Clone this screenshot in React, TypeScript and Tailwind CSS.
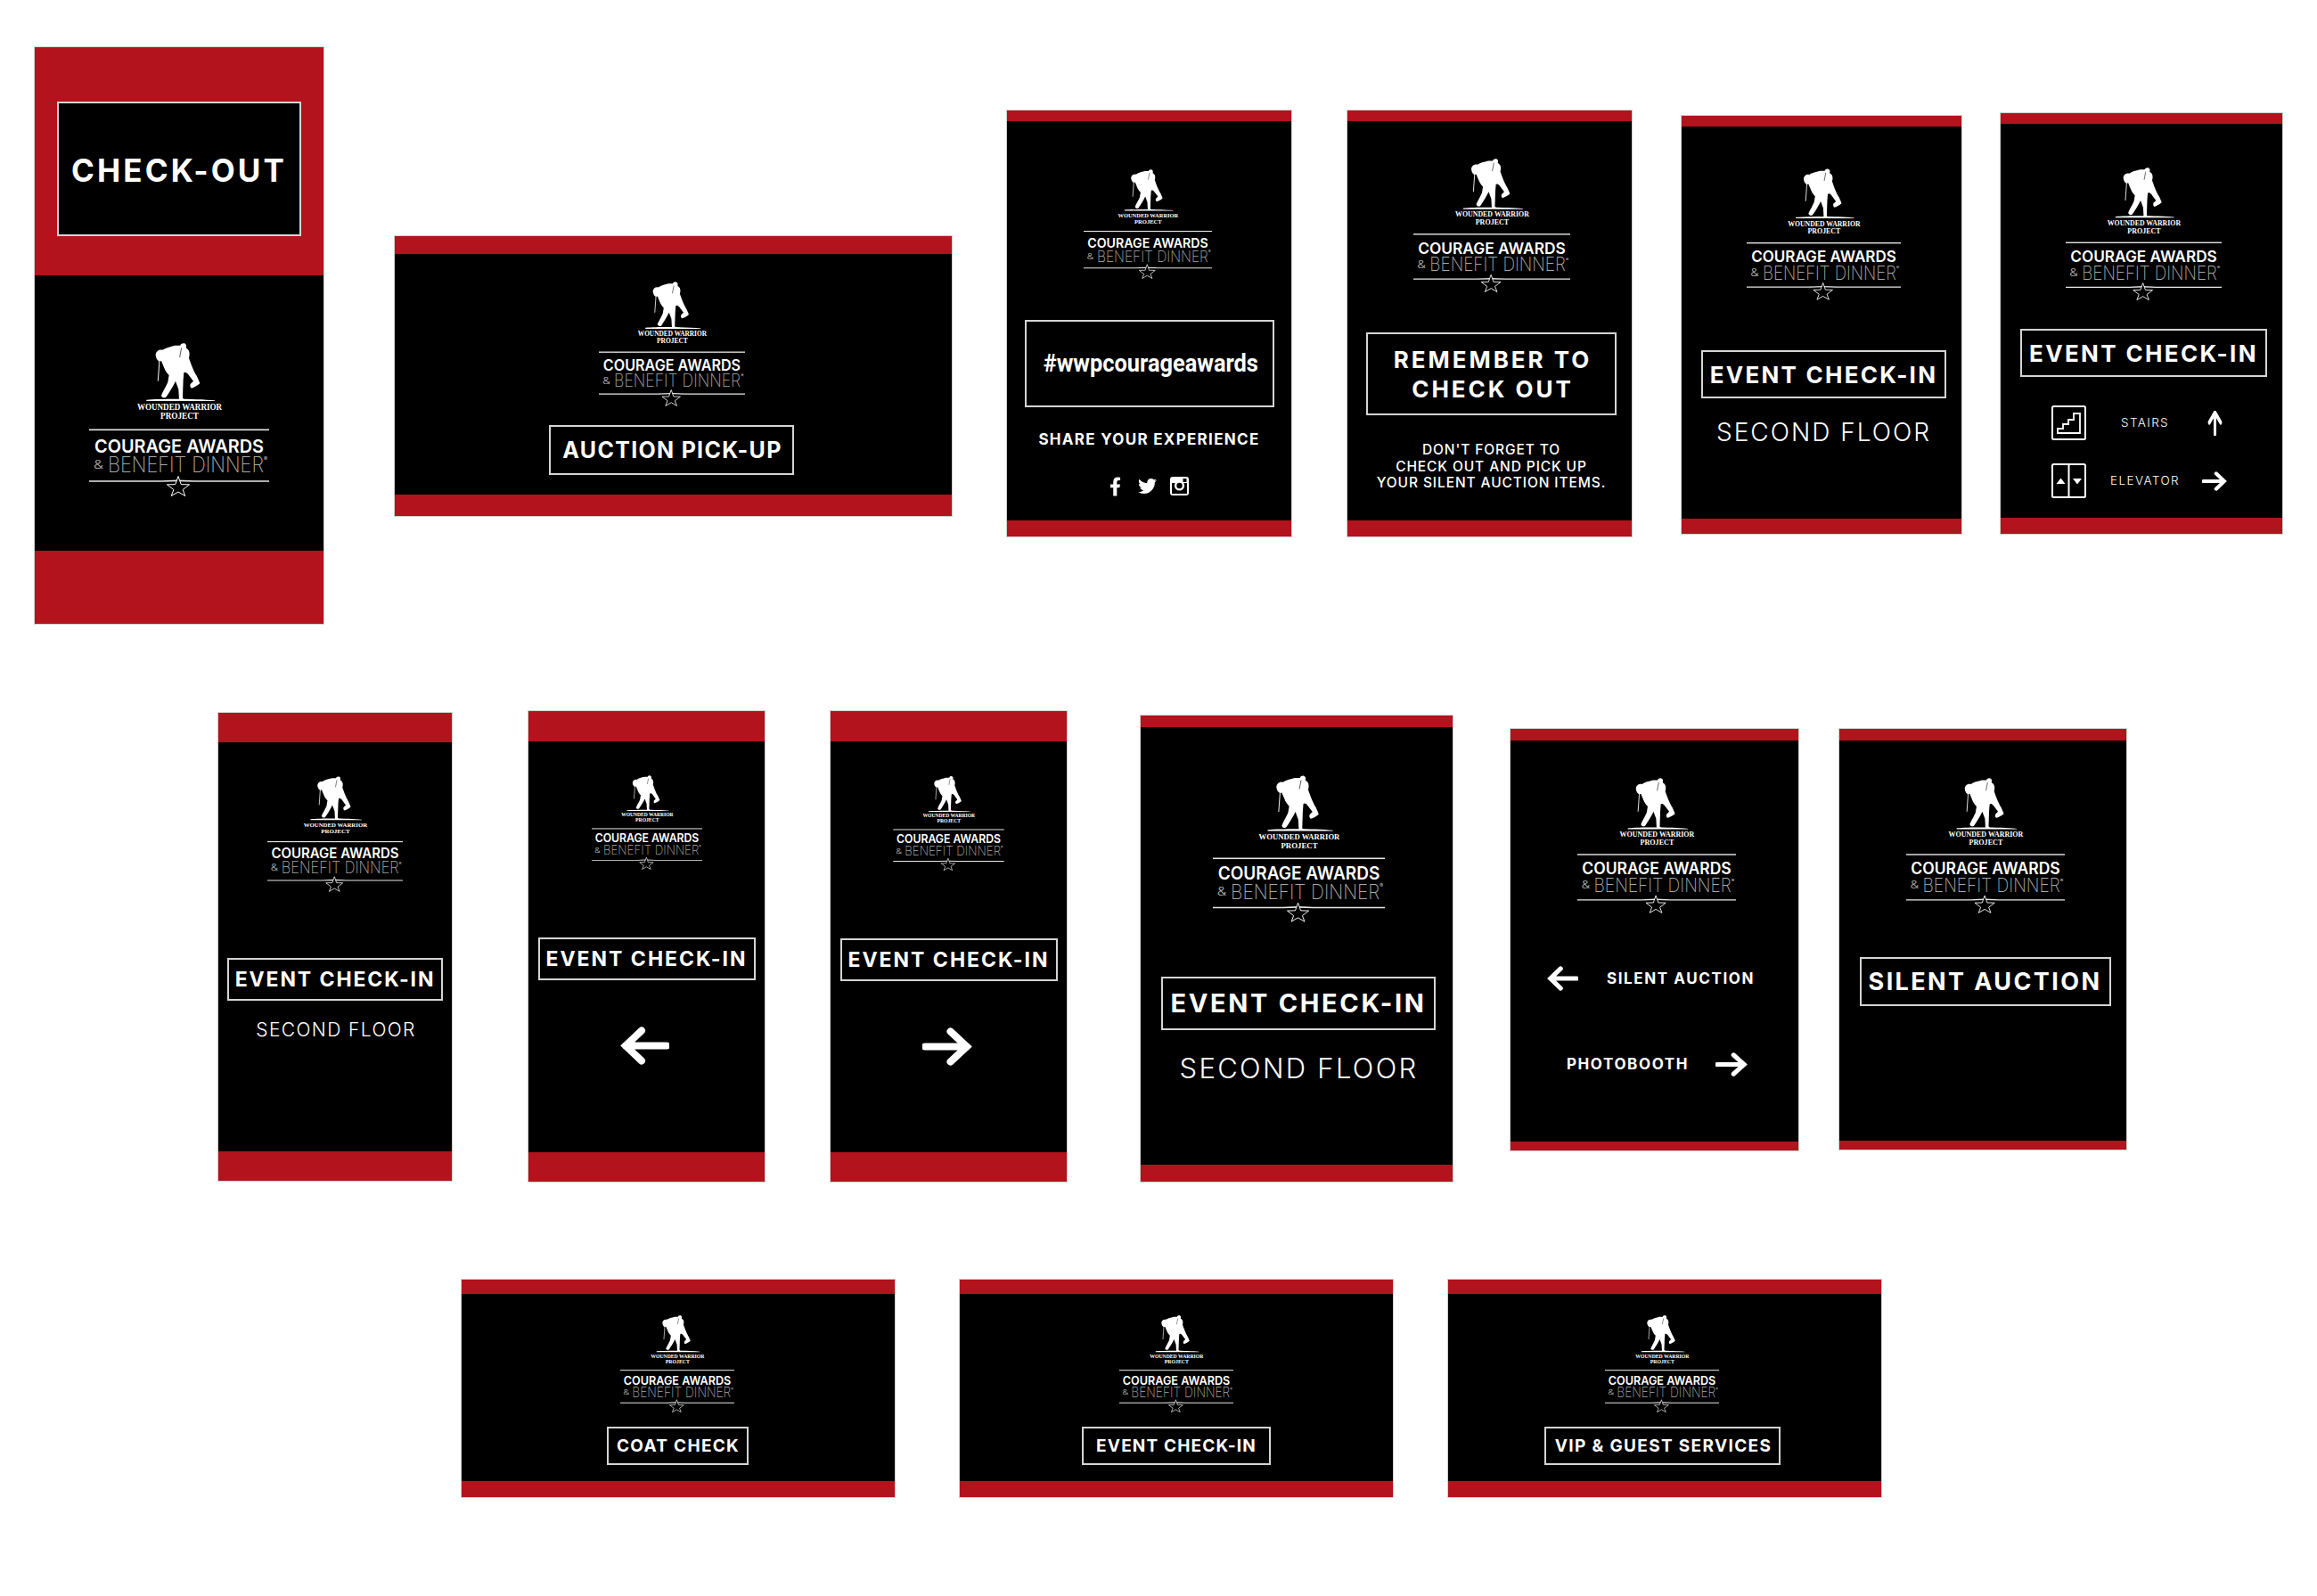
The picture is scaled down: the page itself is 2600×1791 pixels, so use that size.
import React from "react";
import { FaFacebookF, FaTwitter } from "react-icons/fa";

function Logo({ className }: { className: string }) {
  return (
    <svg viewBox="0 0 202 172" className={`shrink-0 ${className}`}>
      <g transform="translate(74.3,0) scale(.3333)" fill="#fff">
        <path d="M1 40C2 28 12 20 24 23C34 16 50 12 66 8L84 8C84 3 92 -1 98 1C104 3 106 10 103 16L110 22C116 28 116 40 113 50L122 75C128 90 135 105 140 112L148 130L150 136C140 145 128 150 122 152C118 150 116 144 118 138L128 128L110 104C104 98 100 96 96 100L94 125L92 185C96 188 98 190 96 191L80 191L78 155L68 128C60 145 48 165 36 182C30 186 22 184 20 176C24 165 34 150 42 132L46 108C38 100 33 92 30 84L24 70L20 60C12 64 3 58 1 40Z" />
        <path d="M14 58L9 128" stroke="#fff" strokeWidth="3" />
        <path d="M-30 191C20 187 140 187 200 193L200 195L-30 195Z" />
        <path d="M88 16L82 48" stroke="#000" strokeWidth="2" fill="none" />
      </g>
      <text x="54" y="75" textLength="95" lengthAdjust="spacingAndGlyphs" fill="#fff" className="[font-family:'Liberation_Serif',serif] font-bold text-[9.5px]">WOUNDED WARRIOR</text>
      <text x="80" y="85" textLength="43" lengthAdjust="spacingAndGlyphs" fill="#fff" className="[font-family:'Liberation_Serif',serif] font-bold text-[9.5px]">PROJECT</text>
      <rect x="0" y="96.5" width="202" height="1.6" fill="#e8e8e8" />
      <text x="6" y="122.5" textLength="190" lengthAdjust="spacingAndGlyphs" fill="#fff" className="[font-family:Inter,sans-serif] font-semibold text-[20.5px]">COURAGE AWARDS</text>
      <text x="5" y="141" textLength="11" lengthAdjust="spacingAndGlyphs" fill="#b0b0b0" className="[font-family:Inter,sans-serif] font-light text-[13px]">&amp;</text>
      <text x="21" y="145" textLength="175" lengthAdjust="spacingAndGlyphs" fill="#a8a8a8" className="[font-family:Inter,sans-serif] font-extralight text-[24.5px]">BENEFIT DINNER</text>
      <text x="196" y="132" fill="#ccc" className="[font-family:Inter,sans-serif] text-[6px]">®</text>
      <path d="M0 154.3H82L100 153.6L118 154.3H202V155.8H118L100 155.3L82 155.8H0Z" fill="#e8e8e8" />
      <path d="M100 149.5L103.2 158.6L112.6 158.8L105.1 164.5L107.8 171.5L100 167L92.2 171.5L94.9 164.5L87.4 158.8L96.8 158.6Z" fill="#000" stroke="#fff" strokeWidth="1" />
    </svg>
  );
}

function Arrow({ dir, className }: { dir: "left" | "right" | "up"; className: string }) {
  const d = dir === "left" ? "M52 21.5H6M24 4.5L6 21.5L24 38.5" : dir === "right" ? "M3 21.5H49M31 4.5L49 21.5L31 38.5" : "M27.5 40V3M11 20L27.5 3L44 20";
  return (
    <svg viewBox="0 0 55 43" preserveAspectRatio="none" className={`shrink-0 ${className}`}>
      <path d={d} fill="none" stroke="#fff" strokeWidth="8" strokeLinecap="round" strokeLinejoin="miter" />
    </svg>
  );
}

function Sign({ pos, top, bottom, topContent, children }: { pos: string; top: string; bottom: string; topContent?: React.ReactNode; children: React.ReactNode }) {
  return (
    <div className={`absolute flex flex-col shadow-[0_0_0_1px_#cfcfcf] ${pos}`}>
      <div className={`shrink-0 bg-[#b2131c] ${top}`}>{topContent}</div>
      <div className="flex min-h-0 flex-1 flex-col items-center overflow-hidden bg-black text-white">{children}</div>
      <div className={`shrink-0 bg-[#b2131c] ${bottom}`} />
    </div>
  );
}

const box = "flex shrink-0 items-center justify-center border-2 border-[#d4d4d4] whitespace-nowrap font-bold";

export default function App() {
  return (
    <div className="relative h-[1791px] w-[2600px] overflow-hidden bg-white [font-family:Inter,sans-serif]">
      {/* Row 1 */}
      <Sign
        pos="left-[39px] top-[53px] w-[324px] h-[647px]"
        top="h-[256px] flex justify-center pt-[61px]"
        bottom="h-[82px]"
        topContent={
          <div className={`${box} h-[151px] w-[274px] bg-black pt-[3px] text-[35px] tracking-[3.1px] text-white`}>CHECK-OUT</div>
        }
      >
        <Logo className="mt-[76px] h-[172px] w-[202px]" />
      </Sign>

      <Sign pos="left-[443px] top-[265px] w-[625px] h-[314px]" top="h-[20px]" bottom="h-[24px]">
        <Logo className="mt-[31px] mr-[3px] h-[140px] w-[164px]" />
        <div className={`${box} mt-[21px] mr-[4px] h-[56px] w-[275px] pt-[1px] pl-[2px] text-[25px] tracking-[1.3px]`}>AUCTION PICK-UP</div>
      </Sign>

      <Sign pos="left-[1130px] top-[124px] w-[319px] h-[478px]" top="h-[12px]" bottom="h-[18px]">
        <Logo className="mt-[54px] mr-[3px] h-[123px] w-[144px]" />
        <div className={`${box} mt-[46px] h-[98px] w-[280px] [font-family:Roboto,sans-serif] text-[27px]`}>
          <span className="inline-block translate-x-[2px] scale-x-[.94]">#wwpcourageawards</span>
        </div>
        <div className="mt-[26px] h-[20px] text-[17px] leading-[20px] font-bold tracking-[1.3px] whitespace-nowrap">SHARE YOUR EXPERIENCE</div>
        <div className="mt-[32px] flex h-[21px] items-center">
          <FaFacebookF className="h-[22px] w-[13px]" />
          <FaTwitter className="ml-[19px] h-[21px] w-[21px]" />
          <svg viewBox="0 0 21 21" className="ml-[15px] h-[21px] w-[21px]">
            <rect x="0" y="0" width="21" height="21" rx="3" fill="#fff" />
            <rect x="2" y="7" width="17" height="12" fill="#000" />
            <rect x="14.5" y="2" width="4" height="4" fill="#000" />
            <circle cx="10.5" cy="10" r="5.6" fill="#fff" />
            <circle cx="10.5" cy="10" r="3.2" fill="#000" />
          </svg>
        </div>
      </Sign>

      <Sign pos="left-[1512px] top-[124px] w-[319px] h-[478px]" top="h-[12px]" bottom="h-[18px]">
        <Logo className="mt-[42px] ml-[5px] h-[150px] w-[176px]" />
        <div className={`${box} mt-[45px] ml-[4px] h-[93px] w-[281px] flex-col pl-[3px] text-center text-[26px] leading-[33px] tracking-[2.95px]`}>
          <div>REMEMBER TO</div>
          <div>CHECK OUT</div>
        </div>
        <div className="mt-[30px] ml-[4px] text-center text-[15.5px] leading-[18.5px] font-medium tracking-[0.9px] whitespace-nowrap">
          <div>DON'T FORGET TO</div>
          <div>CHECK OUT AND PICK UP</div>
          <div>YOUR SILENT AUCTION ITEMS.</div>
        </div>
      </Sign>

      <Sign pos="left-[1887px] top-[130px] w-[314px] h-[469px]" top="h-[12px]" bottom="h-[17px]">
        <Logo className="mt-[47px] ml-[5px] h-[148px] w-[173px]" />
        <div className={`${box} mt-[56px] ml-[5px] h-[54px] w-[275px] text-[26px] tracking-[2.25px]`}>EVENT CHECK-IN</div>
        <div className="mt-[21px] ml-[5px] text-[28px] leading-[34px] font-light tracking-[2px] whitespace-nowrap">SECOND FLOOR</div>
      </Sign>

      <Sign pos="left-[2245px] top-[127px] w-[316px] h-[472px]" top="h-[12px]" bottom="h-[18px]">
        <Logo className="mt-[49px] ml-[4px] h-[149px] w-[175px]" />
        <div className={`${box} mt-[32px] ml-[5px] h-[54px] w-[277px] text-[26px] tracking-[2.35px]`}>EVENT CHECK-IN</div>
        <div className="mt-[32px] mr-[5px] grid w-[197px] grid-cols-[39px_130px_28px] grid-rows-[39px_39px] items-center gap-y-[26px]">
          <svg viewBox="0 0 39 39" className="h-[39px] w-[39px]">
            <rect x="1" y="1" width="37" height="37" rx="1.5" fill="none" stroke="#fff" strokeWidth="2" />
            <path d="M7 31V26H13V21H19V16H25V9H32V31Z" fill="none" stroke="#fff" strokeWidth="1.8" />
          </svg>
          <div className="translate-x-[1px] text-center text-[13.5px] font-light tracking-[1.4px]">STAIRS</div>
          <div className="flex justify-center">
            <Arrow dir="up" className="h-[28px] w-[21px]" />
          </div>
          <svg viewBox="0 0 39 39" className="h-[39px] w-[39px]">
            <rect x="1" y="1" width="37" height="37" rx="1.5" fill="none" stroke="#fff" strokeWidth="2" />
            <path d="M19.5 1V38" stroke="#fff" strokeWidth="2" />
            <path d="M5.5 23L10.5 16.5L15.5 23Z M24 17L29 23.5L34 17Z" fill="#fff" />
          </svg>
          <div className="translate-x-[1px] text-center text-[13.5px] font-light tracking-[1.4px]">ELEVATOR</div>
          <Arrow dir="right" className="h-[22px] w-[28px]" />
        </div>
      </Sign>

      {/* Row 2 */}
      <Sign pos="left-[245px] top-[800px] w-[262px] h-[525px]" top="h-[33px]" bottom="h-[33px]">
        <Logo className="mt-[38px] h-[130px] w-[152px]" />
        <div className={`${box} mt-[74px] h-[48px] w-[242px] text-[23px] tracking-[1.9px]`}>EVENT CHECK-IN</div>
        <div className="mt-[20px] ml-[2px] text-[21px] leading-[26px] font-light tracking-[1.4px] whitespace-nowrap">SECOND FLOOR</div>
      </Sign>

      <Sign pos="left-[593px] top-[798px] w-[265px] h-[528px]" top="h-[34px]" bottom="h-[33px]">
        <Logo className="mt-[38px] h-[106px] w-[124px]" />
        <div className={`${box} mt-[76px] h-[48px] w-[244px] text-[23px] tracking-[2px]`}>EVENT CHECK-IN</div>
        <Arrow dir="left" className="mt-[52px] mr-[5px] h-[43px] w-[55px]" />
      </Sign>

      <Sign pos="left-[932px] top-[798px] w-[265px] h-[528px]" top="h-[34px]" bottom="h-[33px]">
        <Logo className="mt-[39px] h-[106px] w-[125px]" />
        <div className={`${box} mt-[76px] h-[48px] w-[244px] text-[23px] tracking-[2px]`}>EVENT CHECK-IN</div>
        <Arrow dir="right" className="mt-[52px] mr-[3px] h-[43px] w-[56px]" />
      </Sign>

      <Sign pos="left-[1280px] top-[803px] w-[350px] h-[523px]" top="h-[13px]" bottom="h-[19px]">
        <Logo className="mt-[54px] ml-[4px] h-[165px] w-[193px]" />
        <div className={`${box} mt-[61px] ml-[4px] h-[60px] w-[308px] text-[29px] tracking-[2.65px]`}>EVENT CHECK-IN</div>
        <div className="mt-[25px] ml-[5px] text-[31px] leading-[36px] font-light tracking-[2.3px] whitespace-nowrap">SECOND FLOOR</div>
      </Sign>

      <Sign pos="left-[1695px] top-[818px] w-[323px] h-[473px]" top="h-[13px]" bottom="h-[10px]">
        <Logo className="mt-[42px] ml-[5px] h-[152px] w-[178px]" />
        <div className="mt-[59px] mr-[8px] flex h-[28px] items-center gap-[32px] text-[17px] font-bold tracking-[1.6px] whitespace-nowrap">
          <Arrow dir="left" className="h-[28px] w-[35px]" />
          <span className="translate-y-[1px]">SILENT AUCTION</span>
        </div>
        <div className="mt-[69px] ml-[6px] flex h-[27px] items-center gap-[30px] text-[17px] font-bold tracking-[1.6px] whitespace-nowrap">
          <span>PHOTOBOOTH</span>
          <Arrow dir="right" className="h-[27px] w-[36px]" />
        </div>
      </Sign>

      <Sign pos="left-[2064px] top-[818px] w-[322px] h-[472px]" top="h-[13px]" bottom="h-[10px]">
        <Logo className="mt-[42px] ml-[5px] h-[152px] w-[178px]" />
        <div className={`${box} mt-[49px] ml-[5px] h-[55px] w-[282px] pt-[1px] text-[27px] tracking-[2.4px]`}>SILENT AUCTION</div>
      </Sign>

      {/* Row 3 */}
      <Sign pos="left-[518px] top-[1436px] w-[486px] h-[244px]" top="h-[16px]" bottom="h-[18px]">
        <Logo className="mt-[24px] mr-[2px] h-[109px] w-[128px]" />
        <div className={`${box} mt-[16px] mr-[2px] h-[43px] w-[159px] pt-[1px] pl-[2px] text-[19px] tracking-[1.3px]`}>COAT CHECK</div>
      </Sign>

      <Sign pos="left-[1077px] top-[1436px] w-[486px] h-[244px]" top="h-[16px]" bottom="h-[18px]">
        <Logo className="mt-[24px] h-[109px] w-[128px]" />
        <div className={`${box} mt-[16px] h-[43px] w-[212px] pt-[1px] text-[19px] tracking-[1.15px]`}>EVENT CHECK-IN</div>
      </Sign>

      <Sign pos="left-[1625px] top-[1436px] w-[486px] h-[244px]" top="h-[16px]" bottom="h-[18px]">
        <Logo className="mt-[24px] mr-[6px] h-[109px] w-[128px]" />
        <div className={`${box} mt-[16px] mr-[6px] h-[43px] w-[265px] pt-[1px] pl-[3px] text-[19px] tracking-[1.35px]`}>VIP &amp; GUEST SERVICES</div>
      </Sign>
    </div>
  );
}
